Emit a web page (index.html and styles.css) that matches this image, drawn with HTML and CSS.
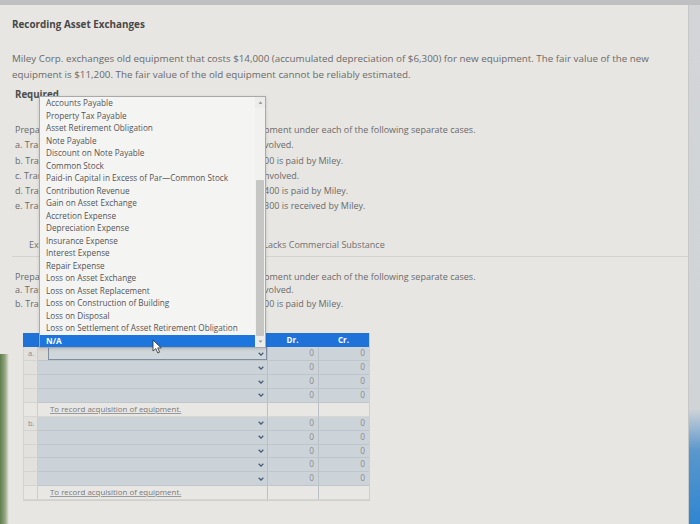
FILE: index.html
```html
<!DOCTYPE html>
<html lang="en">
<head>
<meta charset="utf-8">
<title>Recording Asset Exchanges</title>
<link rel="stylesheet" href="styles.css">
</head>
<body>
<div class="screen">
  <h1 class="title">Recording Asset Exchanges</h1>
  <p class="intro">Miley Corp. exchanges old equipment that costs $14,000 (accumulated depreciation of $6,300) for new equipment. The fair value of the new equipment is $11,200. The fair value of the old equipment cannot be reliably estimated.</p>
  <h2 class="required">Required</h2>

  <div class="cases">
    <p class="line"><span class="lead">Prepare journal entries to record the exchange of equi</span>pment under each of the following separate cases.</p>
    <p class="line"><span class="lead">a. Transaction has commercial substance and no cash is in</span>volved.</p>
    <p class="line"><span class="lead">b. Transaction has commercial substance and $3,0</span>00 is paid by Miley.</p>
    <p class="line"><span class="lead">c. Transaction lacks commercial substance and no cash is i</span>nvolved.</p>
    <p class="line"><span class="lead">d. Transaction lacks commercial substance and $1,</span>400 is paid by Miley.</p>
    <p class="line"><span class="lead">e. Transaction lacks commercial substance and $1,</span>300 is received by Miley.</p>
  </div>

  <div class="tabs">
    <div class="tab active">Exchange Has Commercial Substance</div>
    <div class="tab">Exchange Lacks Commercial Substance</div>
  </div>

  <div class="cases cases-2">
    <p class="line"><span class="lead">Prepare journal entries to record the exchange of equi</span>pment under each of the following separate cases.</p>
    <p class="line"><span class="lead">a. Transaction has commercial substance and no cash is in</span>volved.</p>
    <p class="line"><span class="lead">b. Transaction has commercial substance and $3,0</span>00 is paid by Miley.</p>
  </div>

  <div class="journal">
    <div class="h"></div><div class="h"></div><div class="h">Dr.</div><div class="h">Cr.</div>

    <div class="lbl">a.</div>
    <div class="acct focused"><div class="box"><svg class="chev" viewBox="0 0 6 4"><polyline points="0.7,0.7 3,3.1 5.3,0.7"/></svg></div></div>
    <div class="amt">0</div><div class="amt">0</div>

    <div class="lbl"></div>
    <div class="acct"><div class="box"><svg class="chev" viewBox="0 0 6 4"><polyline points="0.7,0.7 3,3.1 5.3,0.7"/></svg></div></div>
    <div class="amt">0</div><div class="amt">0</div>

    <div class="lbl"></div>
    <div class="acct"><div class="box"><svg class="chev" viewBox="0 0 6 4"><polyline points="0.7,0.7 3,3.1 5.3,0.7"/></svg></div></div>
    <div class="amt">0</div><div class="amt">0</div>

    <div class="lbl"></div>
    <div class="acct"><div class="box"><svg class="chev" viewBox="0 0 6 4"><polyline points="0.7,0.7 3,3.1 5.3,0.7"/></svg></div></div>
    <div class="amt">0</div><div class="amt">0</div>

    <div class="lbl memo"></div>
    <div class="acct memo"><span class="memo-text">To record acquisition of equipment.</span></div>
    <div class="amt memo"></div><div class="amt memo"></div>

    <div class="lbl">b.</div>
    <div class="acct"><div class="box"><svg class="chev" viewBox="0 0 6 4"><polyline points="0.7,0.7 3,3.1 5.3,0.7"/></svg></div></div>
    <div class="amt">0</div><div class="amt">0</div>

    <div class="lbl"></div>
    <div class="acct"><div class="box"><svg class="chev" viewBox="0 0 6 4"><polyline points="0.7,0.7 3,3.1 5.3,0.7"/></svg></div></div>
    <div class="amt">0</div><div class="amt">0</div>

    <div class="lbl"></div>
    <div class="acct"><div class="box"><svg class="chev" viewBox="0 0 6 4"><polyline points="0.7,0.7 3,3.1 5.3,0.7"/></svg></div></div>
    <div class="amt">0</div><div class="amt">0</div>

    <div class="lbl"></div>
    <div class="acct"><div class="box"><svg class="chev" viewBox="0 0 6 4"><polyline points="0.7,0.7 3,3.1 5.3,0.7"/></svg></div></div>
    <div class="amt">0</div><div class="amt">0</div>

    <div class="lbl"></div>
    <div class="acct"><div class="box"><svg class="chev" viewBox="0 0 6 4"><polyline points="0.7,0.7 3,3.1 5.3,0.7"/></svg></div></div>
    <div class="amt">0</div><div class="amt">0</div>

    <div class="lbl memo"></div>
    <div class="acct memo"><span class="memo-text">To record acquisition of equipment.</span></div>
    <div class="amt memo"></div><div class="amt memo"></div>
  </div>

  <div class="dropdown">
    <ul class="options">
      <li>Accounts Payable</li>
      <li>Property Tax Payable</li>
      <li>Asset Retirement Obligation</li>
      <li>Note Payable</li>
      <li>Discount on Note Payable</li>
      <li>Common Stock</li>
      <li>Paid-in Capital in Excess of Par—Common Stock</li>
      <li>Contribution Revenue</li>
      <li>Gain on Asset Exchange</li>
      <li>Accretion Expense</li>
      <li>Depreciation Expense</li>
      <li>Insurance Expense</li>
      <li>Interest Expense</li>
      <li>Repair Expense</li>
      <li>Loss on Asset Exchange</li>
      <li>Loss on Asset Replacement</li>
      <li>Loss on Construction of Building</li>
      <li>Loss on Disposal</li>
      <li>Loss on Settlement of Asset Retirement Obligation</li>
      <li class="selected">N/A</li>
    </ul>
    <div class="scrollbar">
      <div class="sb-btn"><svg viewBox="0 0 6 4"><polygon points="0.5,3.5 3,0.5 5.5,3.5"/></svg></div>
      <div class="sb-track"><div class="sb-thumb"></div></div>
      <div class="sb-btn"><svg viewBox="0 0 6 4"><polygon points="0.5,0.5 3,3.5 5.5,0.5"/></svg></div>
    </div>
  </div>

  <svg class="cursor" viewBox="0 0 10 15"><path d="M1 1 L1 12 L3.8 9.6 L5.8 14 L7.6 13.2 L5.7 8.9 L9.2 8.9 Z"/></svg>
</div>
</body>
</html>
```

FILE: styles.css
```css
* { box-sizing: border-box; }

html, body { margin: 0; padding: 0; }

body {
  width: 700px;
  height: 524px;
  overflow: hidden;
  font-family: "Open Sans", "Noto Sans", sans-serif;
  background: linear-gradient(to bottom, #d3d5d7 0%, #d0d4d7 78%, #5a97cc 86%, #2f86d0 100%);
  border-top: 5px solid #bfc0c1;
}

.screen {
  position: relative;
  width: 689px;
  height: 519px;
  padding: 12px 0 0 12px;
  border-right: 1px solid #c6c7c8;
  background:
    linear-gradient(to right, #5f7d4c 0, #93a580 5px, rgba(231, 230, 226, 0) 9px) left bottom / 9px 170px no-repeat,
    #e7e6e2;
}

.title {
  margin: 0;
  font-size: 9.9px;
  line-height: 14px;
  font-weight: 700;
  color: #474747;
}

.intro {
  margin: 20px 0 0;
  max-width: 664px;
  font-size: 9.8px;
  line-height: 16px;
  color: #6a6a6a;
}

.required {
  margin: 5px 0 0 3px;
  font-size: 9.7px;
  line-height: 14px;
  font-weight: 700;
  color: #4d4d4d;
}

.cases {
  margin-top: 20px;
  padding-left: 3px;
  font-size: 9px;
  line-height: 15.3px;
  color: #6a6a6a;
}

.line {
  margin: 0;
  white-space: nowrap;
}

.lead {
  display: inline-block;
  vertical-align: top;
  width: 249px;
  overflow: hidden;
  white-space: nowrap;
}

.tabs {
  display: flex;
  height: 24px;
  margin-top: 19px;
  border-bottom: 1px solid #d2d2cf;
}

.tab {
  width: 192px;
  padding-left: 17px;
  font-size: 9px;
  line-height: 23px;
  color: #707070;
  white-space: nowrap;
}

.cases-2 {
  margin-top: 13px;
  line-height: 13.5px;
}

/* journal entry grid */
.journal {
  display: grid;
  grid-template-columns: 15px 229px 51px 51px;
  grid-template-rows: 14px;
  grid-auto-rows: 13.9px;
  width: 347px;
  margin: 23px 0 0 11px;
  border-right: 1px solid #cfcfcc;
  border-bottom: 1px solid #cfcfcc;
  font-size: 8px;
}

.h {
  background: #1f73d8;
  color: #ffffff;
  font-weight: 700;
  font-size: 8px;
  line-height: 14px;
  text-align: center;
}

.lbl {
  background: #e2e1dd;
  border-right: 1px solid #cdcdca;
  border-bottom: 1px solid #d3d3d0;
  border-left: 1px solid #d3d3d0;
  padding-left: 4px;
  font-size: 7.5px;
  line-height: 12.8px;
  color: #8a8a8a;
}

.acct {
  display: flex;
  background: #cbd3d8;
  border-bottom: 1px solid #bec6cb;
}

.acct.focused {
  padding-left: 10px;
  background: #dad9d6;
}

.box {
  flex: 1;
  display: flex;
  justify-content: flex-end;
  align-items: center;
  padding-right: 3px;
  background: #cbd3d8;
}

.focused .box {
  border: 1px solid #7f8da3;
  background: #d0d7db;
  padding-right: 2px;
}

.chev {
  width: 6px;
  height: 4px;
  fill: none;
  stroke: #475a77;
  stroke-width: 1.3;
}

.amt {
  background: #ccd4d9;
  border-left: 1px solid #b9c1c6;
  border-bottom: 1px solid #bec6cb;
  padding-right: 4px;
  text-align: right;
  font-size: 8.4px;
  line-height: 12.8px;
  color: #8c8c8c;
}

.memo {
  background: #e8e7e3;
  border-bottom-color: #d6d6d3;
}

.memo-text {
  padding-left: 12px;
  font-size: 7.9px;
  line-height: 12.8px;
  color: #7a7a7a;
  text-decoration: underline;
  text-decoration-color: #9a9a9a;
  white-space: nowrap;
}

/* open select menu */
.dropdown {
  position: absolute;
  left: 39px;
  top: 91px;
  width: 227px;
  height: 252px;
  display: flex;
  background: #f4f4f2;
  border: 1px solid #a9a9a9;
  box-shadow: 0 1px 3px rgba(0, 0, 0, 0.15);
}

.options {
  flex: 1;
  margin: 0;
  padding: 0;
  list-style: none;
}

.options li {
  height: 12.5px;
  padding-left: 6px;
  font-size: 8.2px;
  line-height: 12.5px;
  color: #555555;
  white-space: nowrap;
}

.options li.selected {
  background: #1d76de;
  color: #ffffff;
  font-weight: 700;
}

.scrollbar {
  display: flex;
  flex-direction: column;
  width: 10px;
  background: #f1f1ef;
}

.sb-btn {
  height: 11px;
  display: flex;
  align-items: center;
  justify-content: center;
  background: #ececea;
}

.sb-btn svg {
  width: 5px;
  height: 3px;
  fill: #8a8a8a;
}

.sb-track {
  flex: 1;
  padding: 72px 1px 0;
}

.sb-thumb {
  height: 100%;
  background: #c6c6c4;
  border-radius: 1px;
}

.cursor {
  position: absolute;
  left: 152px;
  top: 334px;
  width: 10px;
  height: 15px;
  fill: #ffffff;
  stroke: #2a2a2a;
  stroke-width: 0.8;
}
```
